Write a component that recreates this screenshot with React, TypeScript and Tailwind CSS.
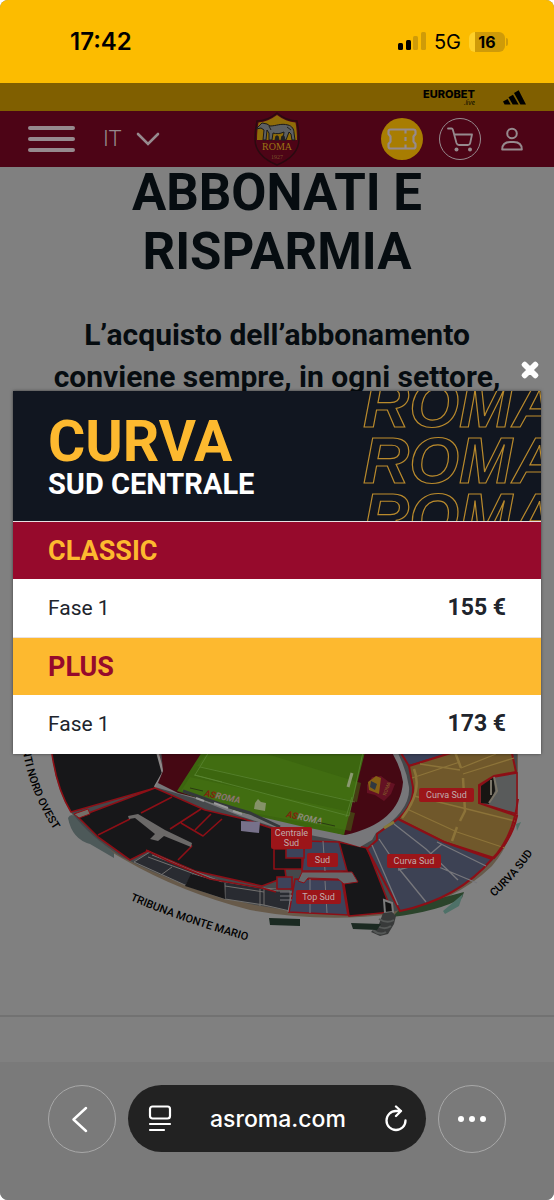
import React from 'react';
import { FaTimes } from 'react-icons/fa';

const plans = [
  { name: 'CLASSIC', band: 'bg-[#960a2c] text-[#fdb92f]', rows: [{ phase: 'Fase 1', price: '155 €' }] },
  { name: 'PLUS', band: 'bg-[#fdb92f] text-[#960a2c]', rows: [{ phase: 'Fase 1', price: '173 €' }] },
];

function StatusBar() {
  return (
    <div className="flex h-[83px] items-center justify-between bg-[#fcbc00] pl-[70px] pr-[46px] font-['Inter',sans-serif] text-black">
      <span className="text-[24px] font-semibold leading-7">17:42</span>
      <div className="flex items-center gap-2">
        <svg width="29" height="19" viewBox="0 0 29 19" aria-hidden="true">
          <rect x="1" y="11" width="5" height="7" rx="1.5" />
          <rect x="9" y="8" width="5" height="10" rx="1.5" />
          <rect x="16" y="4" width="5" height="14" rx="1.5" fill="#cf9b08" />
          <rect x="24" y="0" width="5" height="18" rx="1.5" fill="#cf9b08" />
        </svg>
        <span className="text-[20px] leading-7">5G</span>
        <div className="flex items-center gap-px">
          <div className="flex h-5 w-9 items-center justify-center rounded-md bg-linear-to-r from-[#ffd02a] from-16% to-[#cf9b08] to-16% text-[16px] font-bold">
            16
          </div>
          <div className="h-2 w-0.5 rounded-r bg-[#cf9b08]" />
        </div>
      </div>
    </div>
  );
}

function Sponsors() {
  return (
    <div className="flex h-7 items-center justify-end gap-7 bg-[#805f00] pr-7 text-black">
      <a href="#eurobet" className="flex flex-col items-end font-['Inter',sans-serif]">
        <span className="text-[11px] font-extrabold leading-[10px]">EUROBET</span>
        <span className="text-[6px] italic leading-[7px]">.live</span>
      </a>
      <a href="#adidas" aria-label="adidas">
        <svg width="23" height="15" viewBox="0 0 23 15">
          <path d="M0 11.5 4.6 9l3.1 5.5H1.6zM5.5 7.3 10 4.7l5.6 9.8H9.7zM11 3 15.7.3l7.3 14.2h-5.6z" />
        </svg>
      </a>
    </div>
  );
}

function Crest() {
  return (
    <svg width="46" height="54" viewBox="0 0 46 54" aria-hidden="true">
      <path d="M23 1C17 6 10 9 3 9c-1 6-2 10-2 18 0 13 10 21 22 26 12-5 22-13 22-26 0-8-1-12-2-18-7 0-14-3-20-8z" fill="#4d0416" stroke="#2a0a10" strokeWidth="1.5" />
      <path d="M23 3C17 7.500 11 10 4.500 10.500 3.500 16 3 21 3 28h40c0-7-.5-12-1.500-17.500C35 10 29 7.500 23 3z" fill="#8f6c08" />
      <path d="M5 14l3-3 5 1 3 2c6 0 11-3 18-1 4 1 6 4 6 8l1 7h-3l-1-6-2-2-3 8h-3l1-8c-4 2-8 2-11 1l-1 7h-3v-7l-2-3-1 10h-3l1-10-3-2-5 1z" fill="#5d6062" stroke="#1a1a1a" />
      <path d="M21 28l1-4h2l1 4zM27 28l1-4h2l1 4zM33 15l4 3M15 14l2 4" fill="#202020" stroke="#202020" />
      <text x="23" y="38" textAnchor="middle" fontFamily="Liberation Serif, serif" fontSize="10" fill="#9a7414">ROMA</text>
      <text x="23" y="47" textAnchor="middle" fontFamily="Liberation Serif, serif" fontSize="6" fill="#79502a">1927</text>
    </svg>
  );
}

function NavBar() {
  return (
    <nav className="relative z-10 flex h-14 items-center justify-between bg-[#4d0416] px-7 text-[#968a8e]">
      <div className="flex items-center gap-7">
        <button type="button" aria-label="Menu" className="flex flex-col gap-[7px]">
          <span className="h-1 w-[47px] rounded-full bg-current" />
          <span className="h-1 w-[47px] rounded-full bg-current" />
          <span className="h-1 w-[47px] rounded-full bg-current" />
        </button>
        <button type="button" className="flex items-center gap-3.5 font-['Roboto',sans-serif] text-[22px] font-light leading-7">
          IT
          <svg width="24" height="14" viewBox="0 0 24 14" fill="none" stroke="currentColor" strokeWidth="2.600" strokeLinecap="round">
            <path d="M2 2l10 10L22 2" />
          </svg>
        </button>
      </div>
      <a href="#home" aria-label="AS Roma" className="absolute inset-x-0 top-px mx-auto w-[46px]">
        <Crest />
      </a>
      <div className="flex items-center gap-4">
        <a href="#tickets" aria-label="Biglietti" className="flex size-[42px] items-center justify-center rounded-full bg-[#a87d02]">
          <svg width="30" height="22" viewBox="0 0 30 22" fill="none" stroke="currentColor" strokeWidth="2.200" strokeLinejoin="round">
            <path d="M3.500 1.500h23q2 0 2 2v2.500l-2 2.500v5l2 2.500v2.500q0 2-2 2h-23q-2 0-2-2V16l2-2.500v-5L1.500 6V3.500q0-2 2-2z" />
            <path d="M18.500 2v3.500M18.500 9v4M18.500 16.500V20" />
          </svg>
        </a>
        <a href="#cart" aria-label="Carrello" className="flex size-[42px] items-center justify-center rounded-full border border-current">
          <svg width="27" height="25" viewBox="0 0 27 25" fill="none" stroke="currentColor" strokeWidth="1.800" strokeLinecap="round" strokeLinejoin="round">
            <path d="M1 1.500h3.500q1 0 1.300 1L9.500 16q.6 2 2.500 2h9q1.800 0 2.200-2L25 7.500H7.500" />
            <circle cx="9.500" cy="22.500" r="2" fill="currentColor" stroke="none" />
            <circle cx="23" cy="22.500" r="2" fill="currentColor" stroke="none" />
          </svg>
        </a>
        <a href="#account" aria-label="Account" className="flex w-[29px] justify-center">
          <svg width="22" height="24" viewBox="0 0 22 24" fill="none" stroke="currentColor" strokeWidth="2">
            <circle cx="11" cy="6.500" r="4.800" />
            <path d="M1.200 22.500q0-7.500 8-7.500h3.600q8 0 8 7.500z" strokeLinejoin="round" />
          </svg>
        </a>
      </div>
    </nav>
  );
}

function SectorLabel({ x, y, w, lines }: { x: number; y: number; w: number; lines: string[] }) {
  return (
    <g>
      <rect x={x} y={y} width={w} height={lines.length > 1 ? 22 : 14} rx="2" fill="#9c1519" />
      {lines.map((line, i) => (
        <text key={line} x={x + w / 2} y={y + (lines.length > 1 ? 9 : 10) + i * 10} textAnchor="middle" fontSize="9" fill="#c0adad">
          {line}
        </text>
      ))}
    </g>
  );
}

function StadiumMap() {
  return (
    <svg viewBox="0 640 554 310" className="w-full font-['Roboto',sans-serif]" role="img" aria-label="Mappa dello stadio">
      {/* outer wall */}
      <path d="M52 700V755Q56 792 72 815Q90 842 125 861Q180 893 250 911Q320 924 395 915Q455 903 492 867Q515 840 518 800V700z" fill="#675a4a" />
      <path d="M392 918Q440 912 462 899L464 893 400 910z" fill="#2b442b" />
      <path d="M68 819q3-6 9 0q5 0 6 7q7 1 7 8l24 20v5l-24-14q-18-5-22-26z" fill="#4d5959" />
      <path d="M52 700V755Q56 790 72 814Q90 838 122 858Q180 888 250 905Q320 919 392 913Q455 899 492 862Q513 838 517 800V700z" fill="#45484b" />

      {/* closed sectors */}
      <g fill="#171719" stroke="#8d0f16" strokeWidth="1.600" strokeLinejoin="round">
        <path d="M52 700V755Q57 790 71 813L155 789 163 774 157 750V700z" />
        <path d="M78 818L155 789 178 799 205 811 244 820 280 832 286 878 262 887 195 872 148 852 130 861 98 838z" />
        <path d="M339 843L367 849 392 913 349 917 344 886z" />
        <path d="M274 850H302V870H274z" />
        <path d="M98 836L130 820M141 814L172 798M170 830L201 810M181 824L203 837 222 820M195 831L211 815M192 847L178 861M163 834L192 847" fill="none" />
      </g>
      <path d="M52 754H154" stroke="#8d0f16" />
      <path d="M157 752l6 22-8 14" fill="none" stroke="#8c8888" strokeWidth="2.500" />
      <path d="M74 815l14-5 2 5-11 4z" fill="#746f69" stroke="#8d0f16" strokeWidth="1" />
      <path d="M128 817l10-2 27 16 27 13-1 4-27-11-6 5-8-2 5-5-20-16-6 1z" fill="#6b6968" />

      {/* press and vip stands */}
      <g fill="#292b31" stroke="#73716f" strokeWidth="1">
        <path d="M134 863L150 853 192 872 220 882 262 889 277 890V908L225 900 185 886z" />
        <path d="M172 868l-11 8M193 875l-7 11M225 884v15M260 890v17M152 856l70 27M148 858l74 27M225 887l52 8" fill="none" />
      </g>
      <path d="M191 875L224 884 225 900 185 887z" fill="#171719" />
      <path d="M264 889L277 892H290V912L264 906z" fill="#292b31" stroke="#73716f" />
      <path d="M146 851L170 863 210 880 262 889 276 893" fill="none" stroke="#8d0f16" strokeWidth="1.500" />

      {/* pitch surround */}
      <path d="M160 700L163 773 155 788 200 801 240 817 280 830 340 842 360 848 372 841 376 834Q411 812 409 788Q406 767 393 745V700z" fill="#77777a" />
      <path d="M160 700V740L163 772 158 784 178 794 345 836Q400 824 403 783Q400 763 386 745V700z" fill="#450813" />
      <path d="M212 735L202 753 177 792 240 813 300 827 344 836 365 753 370 735z" fill="#3c660f" />
      <g fill="#457314">
        <path d="M218 740l-21 27 160 36 4-19zM190 778l-9 14 60 20 110 20 4-18z" opacity=".5" />
      </g>
      <path d="M209 753l-14 23 154 41 14-64M200 768l155 35M194 776l28 7M346 818l6-20" fill="none" stroke="#5d8836" strokeWidth=".7" />
      <g fontWeight="bold" fontStyle="italic" fontSize="9">
        <text transform="translate(204 797) rotate(12)" fill="#8a7470"><tspan fill="#84220d">AS</tspan>ROMA</text>
        <text transform="translate(286 818) rotate(12)" fill="#8a8a78"><tspan fill="#84220d">AS</tspan>ROMA</text>
      </g>
      <path d="M190 789l13 3M317 823l18 4" stroke="#2a3a12" />
      <path d="M255 804l3-4 3 3 5 1-1 8-11-2z" fill="#859269" />
      <path d="M352 774l-4 14" stroke="#8a9970" strokeWidth="3" />
      <path d="M183 792L220 805 250 814 280 828" fill="none" stroke="#34383a" strokeWidth="3" />
      <path d="M196 799l8 3M214 804l14 5M233 812l9 3" stroke="#999" strokeWidth="2" />
      <path d="M241 822l19 1-1 11-18-2z" fill="#77718a" />
      <path d="M367 786l5-8 9-1 8 6 6 2-4 10-7 7-9-6-8-2z" fill="#641123" />
      <path d="M368 783l8-6 5 2-2 16-10-4z" fill="#866013" />
      <path d="M371 782l6 3-2 6-5-3z" fill="#303840" />
      <text transform="translate(386 797) rotate(-70)" fontSize="5" fill="#856028">ROMA</text>

      {/* curva sud */}
      <path d="M396 746L409 767 454 753V740H390z" fill="#3a4058" stroke="#8d0f16" strokeWidth="2" />
      <path d="M409 767L454 753 475 740 510 745 516 773 494 777 479 786V804L517 817Q512 840 494 859L444 843 398 820Q414 806 413 788z" fill="#70582b" stroke="#8d0f16" strokeWidth="2" />
      <g fill="none" stroke="#8c7339" strokeWidth="1.300">
        <path d="M414 770Q423 792 402 819M455 753l6 16M463 779l2 33-5 10M457 828l-5 14" strokeWidth="2.500" />
        <path d="M412 779l48-16M463 775l51-16M414 797l49 12 52 13M407 810l50 23 48 16M420 765l40 6M461 769l35-14" />
      </g>
      <path d="M517 774L494 778 480 787V804L517 815z" fill="#595b5b" stroke="#8d0f16" strokeWidth="1.500" />
      <path d="M481 787l13-9 1 14-6 13-8-1z" fill="#171512" />
      <path d="M494 778l3 14-8 12M491 781v15" fill="none" stroke="#797366" strokeWidth="2" />
      <path d="M398 820L444 843 492 860Q458 900 400 912L367 850 377 841V835z" fill="#3d4254" stroke="#8d0f16" strokeWidth="2" />
      <g fill="none" stroke="#77777c" strokeWidth="1.300">
        <path d="M394 825L426 850 458 881M379 840L400 871 426 903M437 843L486 867M422 861L477 884M372 846L398 906M442 845l-14 12M398 871l18-5" />
        <path d="M384 829l10-6" stroke="#867a3a" strokeWidth="3" />
      </g>
      <path d="M491 861Q513 840 518 800" fill="none" stroke="#8d0f16" strokeWidth="2" />

      {/* monte mario sud */}
      <g fill="#3d435a" stroke="#8d0f16" strokeWidth="1.600">
        <path d="M305 842L339 843 347 872H302z" />
        <path d="M286 848h18v11h-18z" />
        <path d="M277 878h15v12h-15zM295 880L342 881 348 916 289 913z" />
      </g>
      <path d="M323 842l2 30M325 882l2 32M310 880v34M291 896l-3 17M280 893h12M280 897h12M280 901h12" stroke="#77777c" />
      <path d="M302 873h50l6 10-14 2-6-5-30-1-4 5-6-2z" fill="#68686b" stroke="#8d0f16" />
      <path d="M384 901l8 3 1 9-8 1z" fill="#111" stroke="#7b7b7b" strokeWidth="2" />
      <path d="M383 914l9-1 4 4-2 8-6 10-8 2-9-4 8-8z" fill="#383a3a" />
      <path d="M376 926q8 6 15 1M379 920q8 5 15 1M373 931q7 6 13 2" fill="none" stroke="#555857" strokeWidth="2" />
      <path d="M269 919l31 1v7l-30-1zM351 924l30 1-4 6-24-1z" fill="#1b2a22" />
      <path d="M443 912l20-17-4 12-14 8zM516 825l5-2-4 9z" fill="#4e7168" />

      <SectorLabel x={271} y={828} w={41} lines={['Centrale', 'Sud']} />
      <SectorLabel x={307} y={854} w={31} lines={['Sud']} />
      <SectorLabel x={296} y={891} w={45} lines={['Top Sud']} />
      <SectorLabel x={419} y={789} w={55} lines={['Curva Sud']} />
      <SectorLabel x={387} y={855} w={54} lines={['Curva Sud']} />

      <defs>
        <path id="nord-ovest" d="M14 680Q18 740 28 775Q36 803 54 831" />
        <path id="monte-mario" d="M130 901Q180 923 266 947" />
        <path id="curva-sud" d="M494 898Q518 878 540 843" />
      </defs>
      <g fontSize="11" fontWeight="500" fill="#000">
        <text><textPath href="#nord-ovest" startOffset="100%" textAnchor="end">DISTINTI NORD OVEST</textPath></text>
        <text><textPath href="#monte-mario">TRIBUNA MONTE MARIO</textPath></text>
        <text><textPath href="#curva-sud">CURVA SUD</textPath></text>
      </g>
    </svg>
  );
}

function PriceModal() {
  return (
    <div role="dialog" aria-label="Curva Sud Centrale" className="relative w-full bg-white shadow-[0_0_3px_rgba(0,0,0,0.5)]">
      <button type="button" aria-label="Chiudi" className="absolute -top-8 right-0 text-white">
        <FaTimes size={22} strokeWidth={40} stroke="currentColor" />
      </button>
      <header className="relative flex h-[130px] flex-col justify-center overflow-hidden bg-[#111620] pl-[35px] pt-1">
        <svg width="178" height="130" viewBox="0 0 178 130" className="absolute right-0 top-0" aria-hidden="true">
          <g fill="none" stroke="#b98a2c" strokeWidth="1.200" fontFamily="'Liberation Sans', sans-serif" fontWeight="bold" fontStyle="italic" fontSize="64">
            <text x="0" y="36">ROMA</text>
            <text x="0" y="92">ROMA</text>
            <text x="0" y="148">ROMA</text>
          </g>
        </svg>
        <h2 className="relative font-bold text-white">
          <span className="block text-[57px] leading-[52px] text-[#fdb92f]">CURVA</span>
          <span className="block text-[29px] leading-8">SUD CENTRALE</span>
        </h2>
      </header>
      <table className="w-full text-left">
        {plans.map((plan) => (
          <tbody key={plan.name}>
            <tr className="border-t border-[#e8e0e2]">
              <th colSpan={2} scope="colgroup" className={`h-[57px] px-[35px] text-[27px] font-bold leading-8 ${plan.band}`}>
                {plan.name}
              </th>
            </tr>
            {plan.rows.map((row) => (
              <tr key={row.phase} className="h-[59px] leading-7 text-[#20242c]">
                <td className="pl-[35px] text-[21px]">{row.phase}</td>
                <td className="pr-[35px] text-right text-[23px] font-bold">{row.price}</td>
              </tr>
            ))}
          </tbody>
        ))}
      </table>
    </div>
  );
}

function BrowserBar() {
  return (
    <footer className="flex h-[138px] items-start justify-between gap-3 bg-[#7a7a7a] px-12 pt-[23px] font-['Inter',sans-serif] text-white">
      <button type="button" aria-label="Indietro" className="flex size-[68px] shrink-0 items-center justify-center rounded-full border border-[#a8a8a8] pr-1">
        <svg width="16" height="27" viewBox="0 0 16 27" fill="none" stroke="currentColor" strokeWidth="2.400" strokeLinecap="round" strokeLinejoin="round">
          <path d="M14 2L1.500 13.500 14 25" />
        </svg>
      </button>
      <div className="flex h-[67px] flex-1 items-center justify-between rounded-full bg-[#222] pl-5 pr-[18px]">
        <button type="button" aria-label="Pagina">
          <svg width="24" height="27" viewBox="0 0 24 27" fill="none" stroke="currentColor" strokeWidth="2.200" strokeLinecap="round">
            <rect x="2" y="1.500" width="20" height="12" rx="2.500" />
            <path d="M2 19h20M2 25h14" />
          </svg>
        </button>
        <span className="text-[23px] font-medium leading-7">asroma.com</span>
        <button type="button" aria-label="Ricarica">
          <svg width="24" height="28" viewBox="0 0 24 28" fill="none" stroke="currentColor" strokeWidth="2.300" strokeLinecap="round" strokeLinejoin="round">
            <path d="M12 6a9.500 9.500 0 1 0 9.500 9.500M11 6h6M12 1.500L17 6l-5 5" />
          </svg>
        </button>
      </div>
      <button type="button" aria-label="Altro" className="flex size-[68px] shrink-0 items-center justify-center gap-[5px] rounded-full border border-[#a8a8a8]">
        <span className="size-1.5 rounded-full bg-white" />
        <span className="size-1.5 rounded-full bg-white" />
        <span className="size-1.5 rounded-full bg-white" />
      </button>
    </footer>
  );
}

export default function App() {
  return (
    <div className="bg-white">
      <div className="flex min-h-screen flex-col overflow-hidden rounded-lg bg-[#808080] font-['Roboto',sans-serif]">
        <StatusBar />
        <div className="relative flex-1">
          <Sponsors />
          <NavBar />
          <main className="border-b-2 border-[#727272] pb-[66px] text-center text-[#060c10]">
            <h1 className="-mt-1 px-20 text-[51px] font-bold leading-[59px]">ABBONATI E RISPARMIA</h1>
            <p className="mt-[33px] h-[84px] px-10 text-[30px] font-bold leading-[42px]">
              L’acquisto dell’abbonamento conviene sempre, in ogni settore,
            </p>
            <div className="mt-[241px]">
              <StadiumMap />
            </div>
          </main>
          <div className="absolute inset-0 z-20 flex items-center px-[13px]">
            <PriceModal />
          </div>
        </div>
        <BrowserBar />
      </div>
    </div>
  );
}
